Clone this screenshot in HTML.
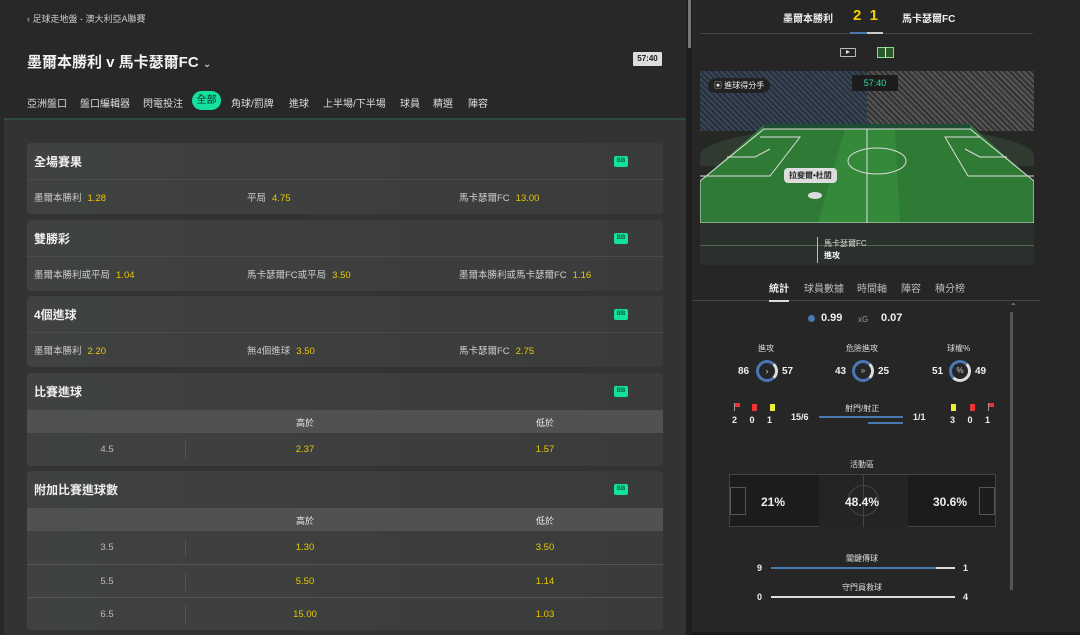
<!DOCTYPE html>
<html><head><meta charset="utf-8"><style>
*{margin:0;padding:0;box-sizing:border-box}
body{width:1080px;height:635px;background:#262626;font-family:"Liberation Sans","Noto Sans CJK TC",sans-serif;color:#ddd;overflow:hidden;position:relative;font-size:10px}
.a{position:absolute}
.card{position:absolute;left:27px;width:636px;background:linear-gradient(90deg,#3f4240,#3a3c3b);border-radius:4px;overflow:hidden}
.hd{height:37px;display:flex;align-items:center;padding-left:7px;font-size:12px;font-weight:bold;color:#f0f0f0;position:relative;border-bottom:1px solid #4a4c4b}
.bb{position:absolute;right:35px;top:13px;width:14px;height:11px;background:#14e0a0;border-radius:2px;font-size:6px;color:#063;text-align:center;line-height:11px;font-weight:bold}
.row{height:34px;display:flex;align-items:center;font-size:9.5px;color:#ccc;position:relative}
.y{color:#e8c800;margin-left:6px}
.sub{height:23px;background:#4f5250;position:relative;font-size:9px;color:#eee}
.tr{height:33px;position:relative;border-top:1px solid #555;font-size:9.5px}
.c1{position:absolute;left:0;width:160px;text-align:center;color:#bbb;top:11px}
.c2{position:absolute;left:178px;width:200px;text-align:center;color:#e8c800;top:11px}
.c3{position:absolute;left:418px;width:200px;text-align:center;color:#e8c800;top:11px}
.sep{position:absolute;left:158px;top:8px;height:18px;border-left:1px solid #555}
.tab{position:absolute;top:95px;font-size:10px;color:#ddd}
.w{color:#eee;font-weight:bold}
</style></head><body>
<div class="a" style="left:0;top:0;width:686px;height:635px;background:#282828"></div>
<div class="a" style="left:4px;top:119px;width:682px;height:516px;background:#333"></div>
<div class="a" style="left:4px;top:118px;width:682px;height:2px;background:#2f4a40"></div>
<div class="a" style="left:686px;top:0;width:6px;height:635px;background:#1e1e1e"></div>
<div class="a" style="left:688px;top:0;width:3px;height:48px;background:#777"></div>
<div class="a" style="left:27px;top:12px;font-size:9px;color:#ccc">‹ 足球走地盤 - 澳大利亞A聯賽</div>
<div class="a" style="left:27px;top:51px;font-size:15px;font-weight:bold;color:#f2f2f2">墨爾本勝利 v 馬卡瑟爾FC <span style="font-size:10px;font-weight:normal">⌄</span></div>
<div class="a" style="left:633px;top:52px;width:29px;height:14px;background:#ddd;color:#222;font-size:8px;font-weight:bold;text-align:center;line-height:14px;border-radius:1px">57:40</div>
<div class="tab" style="left:27px">亞洲盤口</div>
<div class="tab" style="left:80px">盤口編輯器</div>
<div class="tab" style="left:143px">閃電投注</div>
<div class="a" style="left:192px;top:91px;width:29px;height:19px;border-radius:10px;background:#14e0a0;color:#0a2a20;font-size:10px;text-align:center;line-height:19px">全部</div>
<div class="tab" style="left:231px">角球/罰牌</div>
<div class="tab" style="left:289px">進球</div>
<div class="tab" style="left:323px">上半場/下半場</div>
<div class="tab" style="left:400px">球員</div>
<div class="tab" style="left:433px">精選</div>
<div class="tab" style="left:468px">陣容</div>

<div class="card" style="top:143px"><div class="hd">全場賽果<div class="bb">BB</div></div>
<div class="row"><span class="a" style="left:7px">墨爾本勝利<span class="y">1.28</span></span><span class="a" style="left:220px">平局<span class="y">4.75</span></span><span class="a" style="left:432px">馬卡瑟爾FC<span class="y">13.00</span></span></div></div>
<div class="card" style="top:220px"><div class="hd">雙勝彩<div class="bb">BB</div></div>
<div class="row"><span class="a" style="left:7px">墨爾本勝利或平局<span class="y">1.04</span></span><span class="a" style="left:220px">馬卡瑟爾FC或平局<span class="y">3.50</span></span><span class="a" style="left:432px">墨爾本勝利或馬卡瑟爾FC<span class="y">1.16</span></span></div></div>
<div class="card" style="top:296px"><div class="hd">4個進球<div class="bb">BB</div></div>
<div class="row"><span class="a" style="left:7px">墨爾本勝利<span class="y">2.20</span></span><span class="a" style="left:220px">無4個進球<span class="y">3.50</span></span><span class="a" style="left:432px">馬卡瑟爾FC<span class="y">2.75</span></span></div></div>
<div class="card" style="top:373px"><div class="hd" style="border:none">比賽進球<div class="bb">BB</div></div>
<div class="sub"><span class="a" style="left:178px;width:200px;text-align:center;top:6px">高於</span><span class="a" style="left:418px;width:200px;text-align:center;top:6px">低於</span></div>
<div class="tr" style="border:none"><div class="c1">4.5</div><div class="sep"></div><div class="c2">2.37</div><div class="c3">1.57</div></div></div>
<div class="card" style="top:471px;height:159px"><div class="hd" style="border:none">附加比賽進球數<div class="bb">BB</div></div>
<div class="sub"><span class="a" style="left:178px;width:200px;text-align:center;top:6px">高於</span><span class="a" style="left:418px;width:200px;text-align:center;top:6px">低於</span></div>
<div class="tr" style="border:none"><div class="c1">3.5</div><div class="sep"></div><div class="c2">1.30</div><div class="c3">3.50</div></div>
<div class="tr"><div class="c1">5.5</div><div class="sep"></div><div class="c2">5.50</div><div class="c3">1.14</div></div>
<div class="tr"><div class="c1">6.5</div><div class="sep"></div><div class="c2">15.00</div><div class="c3">1.03</div></div></div>

<!-- right -->
<div class="a w" style="left:783px;top:10px;font-size:10px">墨爾本勝利</div>
<div class="a" style="left:853px;top:7px;font-size:15px;font-weight:bold;color:#f5d000">2&nbsp;&nbsp;1</div>
<div class="a w" style="left:902px;top:10px;font-size:10px">馬卡瑟爾FC</div>
<div class="a" style="left:700px;top:33px;width:333px;height:1px;background:#444"></div>
<div class="a" style="left:850px;top:32px;width:17px;height:2px;background:#4a78b0"></div>
<div class="a" style="left:867px;top:32px;width:16px;height:2px;background:#ccc"></div>
<div class="a" style="left:840px;top:48px;width:16px;height:9px;border:1px solid #bbb;border-radius:1px"></div>
<div class="a" style="left:846px;top:50px;border-left:4px solid #ddd;border-top:2.5px solid transparent;border-bottom:2.5px solid transparent"></div>
<div class="a" style="left:877px;top:47px;width:17px;height:11px;border:1px solid #8d8;background:#2a5a2a"></div>
<div class="a" style="left:885px;top:47px;width:1px;height:11px;background:#cfc"></div>
<!-- pitch -->
<div class="a" style="left:700px;top:71px;width:334px;height:194px;background:#262826;overflow:hidden">
<div class="a" style="left:0;top:0;width:334px;height:60px;background:repeating-linear-gradient(45deg,#3a4658 0 2px,#26303c 2px 4px)"></div>
<div class="a" style="left:167px;top:0;width:167px;height:60px;background:repeating-linear-gradient(45deg,#555 0 2px,#333 2px 4px)"></div>
<div class="a" style="left:0;top:55px;width:334px;height:40px;background:#303a30;border-radius:50% 50% 0 0/30px 30px 0 0"></div>
<svg class="a" style="left:0;top:0" width="334" height="194">
<polygon points="64,54 270,54 334,110 334,152 0,152 0,110" fill="#2f7a35"/>
<polygon points="145,58 195,58 200,152 118,152" fill="#3a9a40" opacity=".5"/>
<rect x="64" y="53" width="206" height="5" fill="#1d4d35"/>
<g stroke="#ddd" stroke-width="1" fill="none">
<polygon points="64,58 270,58 334,110 334,152 0,152 0,110"/>
<line x1="167" y1="58" x2="167" y2="152"/>
<ellipse cx="177" cy="90" rx="29" ry="13"/>
<polyline points="0,105 70,105 100,66 60,66"/>
<polyline points="27,86 55,86 70,78"/>
<polyline points="334,105 268,105 245,66 280,66"/>
<polyline points="307,86 280,86 265,78"/>
</g>
<rect x="0" y="152" width="334" height="42" fill="#2b302c"/>
<rect x="0" y="174" width="334" height="1" fill="#4a6a4a"/>
</svg>
<div class="a" style="left:152px;top:4px;width:46px;height:16px;background:#1c1c1c;color:#28e0a0;font-size:9px;text-align:center;line-height:16px">57:40</div>
<div class="a" style="left:8px;top:7px;height:15px;padding:0 6px;background:#222;border-radius:8px;font-size:8px;color:#eee;line-height:15px">▣ 進球得分手</div>
<div class="a" style="left:84px;top:97px;padding:2px 5px;background:#ddd;border-radius:4px;font-size:8px;color:#222;font-weight:bold">拉斐爾•杜閭</div>
<div class="a" style="left:108px;top:121px;width:14px;height:7px;background:#ddd;border-radius:50%"></div>
<div class="a" style="left:117px;top:166px;height:26px;border-left:1px solid #bbb"></div>
<div class="a" style="left:124px;top:167px;font-size:8px;color:#ddd;line-height:12px">馬卡瑟爾FC<br><b style="color:#fff">進攻</b></div>
</div>
<div class="a w" style="left:769px;top:280px;font-size:10px">統計</div>
<div class="a" style="left:804px;top:280px;font-size:10px;color:#bbb">球員數據</div>
<div class="a" style="left:857px;top:280px;font-size:10px;color:#bbb">時間軸</div>
<div class="a" style="left:901px;top:280px;font-size:10px;color:#bbb">陣容</div>
<div class="a" style="left:935px;top:280px;font-size:10px;color:#bbb">積分榜</div>
<div class="a" style="left:692px;top:300px;width:348px;height:1px;background:#444"></div>
<div class="a" style="left:769px;top:300px;width:20px;height:2px;background:#ddd"></div>
<div class="a" style="left:1010px;top:302px;font-size:8px;color:#aaa">⌃</div>
<div class="a" style="left:1010px;top:312px;width:3px;height:278px;background:#555"></div>
<div class="a" style="left:808px;top:315px;width:7px;height:7px;border-radius:50%;background:#4a78b0"></div>
<div class="a w" style="left:821px;top:312px;font-size:11px">0.99</div>
<div class="a" style="left:858px;top:315px;font-size:8px;color:#999">xG</div>
<div class="a w" style="left:881px;top:312px;font-size:11px">0.07</div>
<div class="a" style="left:758px;top:343px;font-size:8px">進攻</div>
<div class="a" style="left:846px;top:343px;font-size:8px">危險進攻</div>
<div class="a" style="left:947px;top:343px;font-size:8px">球權%</div>
<div class="a w" style="left:738px;top:366px;font-size:10px">86</div>
<div class="a" style="left:756px;top:360px;width:22px;height:22px;border-radius:50%;border:3px solid #4a78b0;border-right-color:#ddd;color:#ccc;font-size:9px;text-align:center;line-height:16px">›</div>
<div class="a w" style="left:782px;top:366px;font-size:10px">57</div>
<div class="a w" style="left:835px;top:366px;font-size:10px">43</div>
<div class="a" style="left:852px;top:360px;width:22px;height:22px;border-radius:50%;border:3px solid #4a78b0;border-right-color:#ddd;color:#ccc;font-size:8px;text-align:center;line-height:16px">»</div>
<div class="a w" style="left:878px;top:366px;font-size:10px">25</div>
<div class="a w" style="left:932px;top:366px;font-size:10px">51</div>
<div class="a" style="left:949px;top:360px;width:22px;height:22px;border-radius:50%;border:3px solid #4a78b0;border-right-color:#ddd;border-bottom-color:#ddd;color:#ccc;font-size:8px;text-align:center;line-height:16px">%</div>
<div class="a w" style="left:975px;top:366px;font-size:10px">49</div>
<div class="a" style="left:734px;top:403px;width:6px;height:8px;border-left:1px solid #999"><div style="width:5px;height:4px;background:#e33"></div></div>
<div class="a" style="left:752px;top:404px;width:5px;height:7px;background:#e33"></div>
<div class="a" style="left:770px;top:404px;width:5px;height:7px;background:#ee3"></div>
<div class="a w" style="left:732px;top:415px;font-size:9px;word-spacing:10px">2 0 1</div>
<div class="a" style="left:951px;top:404px;width:5px;height:7px;background:#ee3"></div>
<div class="a" style="left:970px;top:404px;width:5px;height:7px;background:#e33"></div>
<div class="a" style="left:988px;top:403px;width:6px;height:8px;border-left:1px solid #999"><div style="width:5px;height:4px;background:#e33"></div></div>
<div class="a w" style="left:950px;top:415px;font-size:9px;word-spacing:10px">3 0 1</div>
<div class="a" style="left:845px;top:403px;font-size:8px">射門/射正</div>
<div class="a w" style="left:791px;top:412px;font-size:9px">15/6</div>
<div class="a" style="left:819px;top:416px;width:84px;height:2px;background:#4a78b0"></div>
<div class="a" style="left:868px;top:422px;width:35px;height:2px;background:#4a78b0"></div>
<div class="a w" style="left:913px;top:412px;font-size:9px">1/1</div>
<div class="a" style="left:850px;top:459px;font-size:8px">活動區</div>
<div class="a" style="left:729px;top:474px;width:267px;height:53px;border:1px solid #444;background:#1c1c1c">
<div class="a" style="left:89px;top:0;width:89px;height:52px;background:#242424"></div>
<div class="a" style="left:133px;top:0;height:52px;border-left:1px solid #444"></div>
<div class="a" style="left:118px;top:10px;width:31px;height:31px;border:1px solid #444;border-radius:50%"></div>
<div class="a" style="left:0;top:12px;width:16px;height:28px;border:1px solid #555"></div>
<div class="a" style="right:0;top:12px;width:16px;height:28px;border:1px solid #555"></div>
<div class="a w" style="left:31px;top:20px;font-size:12px">21%</div>
<div class="a w" style="left:115px;top:20px;font-size:12px">48.4%</div>
<div class="a w" style="left:203px;top:20px;font-size:12px">30.6%</div>
</div>
<div class="a" style="left:846px;top:553px;font-size:8px">關鍵傳球</div>
<div class="a w" style="left:757px;top:563px;font-size:9px">9</div>
<div class="a" style="left:771px;top:567px;width:165px;height:2px;background:#4a78b0"></div>
<div class="a" style="left:936px;top:567px;width:19px;height:2px;background:#ddd"></div>
<div class="a w" style="left:963px;top:563px;font-size:9px">1</div>
<div class="a" style="left:842px;top:582px;font-size:8px">守門員救球</div>
<div class="a w" style="left:757px;top:592px;font-size:9px">0</div>
<div class="a" style="left:771px;top:596px;width:184px;height:2px;background:#ddd"></div>
<div class="a w" style="left:963px;top:592px;font-size:9px">4</div>
<div class="a" style="left:1040px;top:0;width:40px;height:635px;background:#262626"></div>
<div class="a" style="left:692px;top:632px;width:388px;height:3px;background:#1a1a1a"></div>
</body></html>
